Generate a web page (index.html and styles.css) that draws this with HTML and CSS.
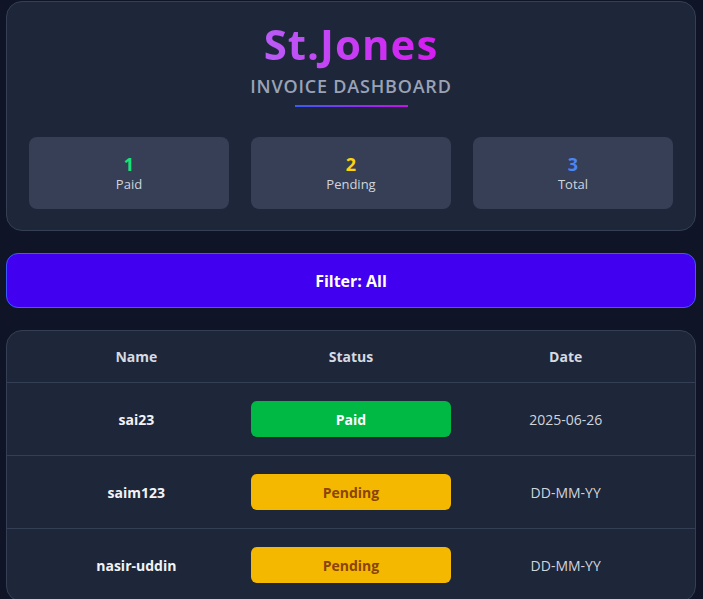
FILE: index.html
```html
<!DOCTYPE html>
<html>
<head>
<meta charset="utf-8">
<link rel="stylesheet" href="styles.css">
</head>
<body>
<div class="page">
  <section class="card header">
    <h1 class="title">St.Jones</h1>
    <div class="subtitle">INVOICE DASHBOARD</div>
    <div class="rule"></div>
    <div class="stats">
      <div class="stat"><div class="num paid">1</div><div class="label">Paid</div></div>
      <div class="stat"><div class="num pending">2</div><div class="label">Pending</div></div>
      <div class="stat"><div class="num total">3</div><div class="label">Total</div></div>
    </div>
  </section>
  <button class="filter">Filter: All</button>
  <section class="card table">
    <div class="row head">
      <div class="cell">Name</div>
      <div class="cell">Status</div>
      <div class="cell">Date</div>
    </div>
    <div class="row">
      <div class="cell name">sai23</div>
      <div class="cell"><span class="badge b-paid">Paid</span></div>
      <div class="cell date">2025-06-26</div>
    </div>
    <div class="row">
      <div class="cell name">saim123</div>
      <div class="cell"><span class="badge b-pending">Pending</span></div>
      <div class="cell date">DD-MM-YY</div>
    </div>
    <div class="row">
      <div class="cell name">nasir-uddin</div>
      <div class="cell"><span class="badge b-pending">Pending</span></div>
      <div class="cell date">DD-MM-YY</div>
    </div>
  </section>
</div>
</body>
</html>
```
FILE: styles.css
```css
* { box-sizing: border-box; }
html, body { margin: 0; padding: 0; background: #0f1526; }
body {
  font-family: "Open Sans", "Noto Sans", sans-serif;
  color: #e5e7eb;
}
.page {
  padding: 1px 7px 20px 6px;
  display: flex;
  flex-direction: column;
  gap: 22px;
}
.card {
  background: #1e263a;
  border: 1px solid #343f55;
  border-radius: 16px;
}
.header {
  padding: 17px 22px 21px;
  display: flex;
  flex-direction: column;
  align-items: center;
}
.title {
  margin: 0;
  font-size: 42px;
  line-height: 50px;
  font-weight: 700;
  letter-spacing: 1px;
  background: linear-gradient(90deg, #b95cf6, #d61cf2);
  -webkit-background-clip: text;
  background-clip: text;
  color: transparent;
}
.subtitle {
  margin-top: 5px;
  font-size: 18px;
  line-height: 24px;
  letter-spacing: 0.8px;
  color: #9aa3b5;
  font-weight: 600;
}
.rule {
  margin-top: 7px;
  width: 113px;
  height: 2px;
  background: linear-gradient(90deg, #3b5bf6, #c711e8);
}
.stats {
  margin-top: 30px;
  width: 100%;
  display: grid;
  grid-template-columns: repeat(3, 1fr);
  gap: 22px;
}
.stat {
  background: #363f55;
  border-radius: 8px;
  height: 72px;
  display: flex;
  flex-direction: column;
  align-items: center;
  justify-content: center;
}
.num { font-size: 18px; font-weight: 700; line-height: 22px; }
.num.paid { color: #12e57a; }
.num.pending { color: #fdd30c; }
.num.total { color: #4b84f3; }
.label { font-size: 13px; line-height: 18px; color: #d0d5dd; }
.filter {
  height: 55px;
  width: 100%;
  background: #4100f0;
  border: 1px solid #3d5bf7;
  border-radius: 12px;
  color: #ffffff;
  font-family: inherit;
  font-size: 16px;
  font-weight: 700;
}
.table { overflow: hidden; }
.row {
  display: grid;
  grid-template-columns: repeat(3, 1fr);
  padding: 0 22px;
  height: 73px;
  align-items: center;
  border-top: 1px solid #343f55;
}
.row.head { height: 51px; border-top: none; }
.cell { text-align: center; font-size: 14px; }
.head .cell { font-weight: 700; color: #d6dae2; font-size: 14px; }
.name { font-weight: 700; color: #f1f3f6; }
.date { color: #d0d5dd; }
.badge {
  display: flex;
  align-items: center;
  justify-content: center;
  width: 200px;
  height: 36px;
  margin: 0 auto;
  border-radius: 6px;
  font-weight: 700;
  font-size: 14px;
}
.b-paid { background: #00b844; color: #ffffff; }
.b-pending { background: #f5b800; color: #8a4506; }
```
